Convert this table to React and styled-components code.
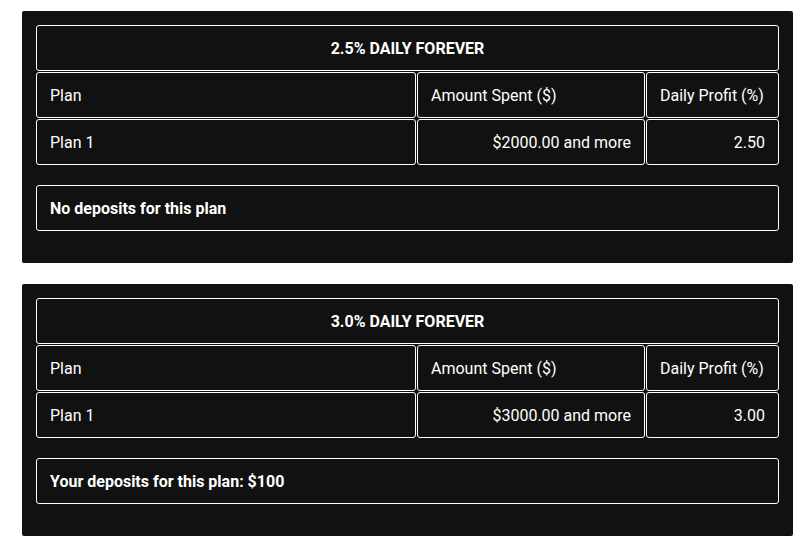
import React from 'react';
import styled, { createGlobalStyle } from 'styled-components';

const GlobalStyle = createGlobalStyle`
  body {
    margin: 0;
    background: #ffffff;
    font-family: Roboto, "Liberation Sans", sans-serif;
  }
`;

const Page = styled.div`
  display: flex;
  flex-direction: column;
  gap: 21px;
  padding: 11px 0 0 22px;
`;

const Card = styled.section`
  width: 771px;
  box-sizing: border-box;
  background-color: #111111;
  border-radius: 2px;
  padding: 14px 14px 32px;
  color: #ffffff;
`;

const Table = styled.div`
  display: grid;
  grid-template-columns: 380px 228px 1fr;
  gap: 1px;
`;

const Cell = styled.div`
  height: 46px;
  box-sizing: border-box;
  border: 1px solid #ffffff;
  border-radius: 3px;
  display: flex;
  align-items: center;
  padding: 0 13px;
  font-size: 16px;
  font-weight: ${(p) => (p.$bold ? 700 : 400)};
  justify-content: ${(p) =>
    p.$align === 'right' ? 'flex-end' : p.$align === 'center' ? 'center' : 'flex-start'};
  grid-column: ${(p) => (p.$span ? `span ${p.$span}` : 'auto')};
`;

const Notice = styled(Cell)`
  margin-top: 20px;
  font-weight: 700;
`;

const plans = [
  { title: '2.5% DAILY FOREVER', amount: '$2000.00 and more', profit: '2.50', note: 'No deposits for this plan' },
  { title: '3.0% DAILY FOREVER', amount: '$3000.00 and more', profit: '3.00', note: 'Your deposits for this plan: $100' },
];

const PlanCard = ({ plan }) => (
  <Card>
    <Table>
      <Cell $span={3} $align="center" $bold>{plan.title}</Cell>
      <Cell>Plan</Cell>
      <Cell>Amount Spent ($)</Cell>
      <Cell>Daily Profit (%)</Cell>
      <Cell>Plan 1</Cell>
      <Cell $align="right">{plan.amount}</Cell>
      <Cell $align="right">{plan.profit}</Cell>
    </Table>
    <Notice>{plan.note}</Notice>
  </Card>
);

export default function App() {
  return (
    <>
      <GlobalStyle />
      <Page>
        {plans.map((p) => (
          <PlanCard key={p.title} plan={p} />
        ))}
      </Page>
    </>
  );
}
